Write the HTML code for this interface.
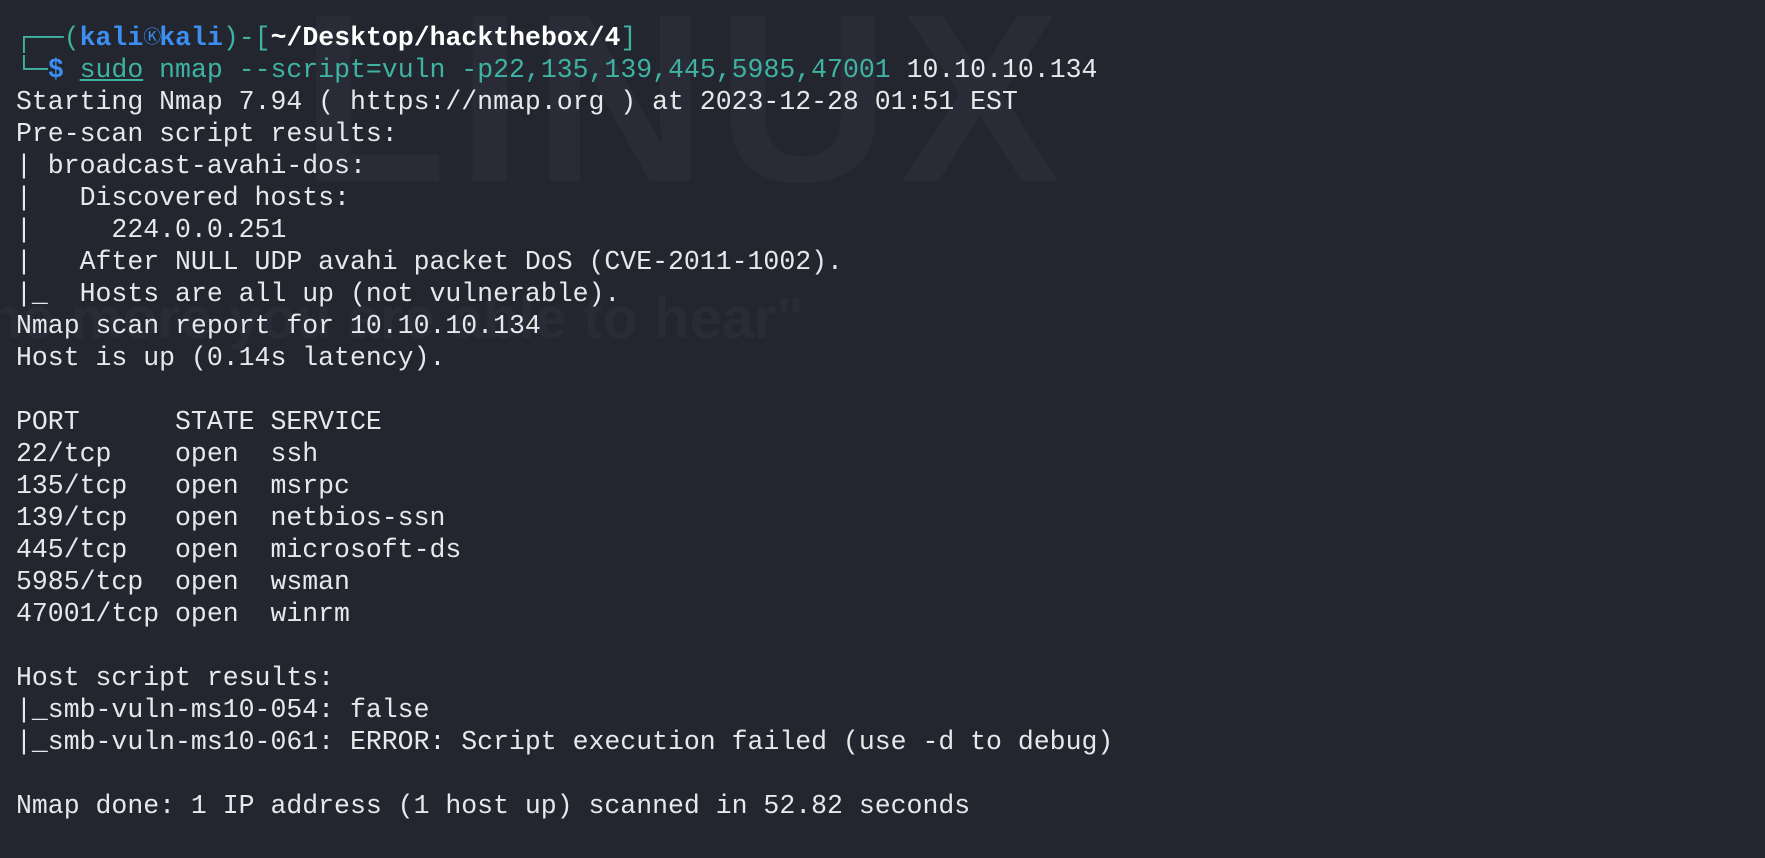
<!DOCTYPE html>
<html style="width:1765px;height:858px;overflow:hidden;"><head><meta charset="utf-8"><style>
html,body{margin:0;padding:0;}
body{width:1765px;height:858px;overflow:hidden;background:#23252f;position:relative;}
pre{position:absolute;left:16px;top:22px;margin:0;font-family:"Liberation Mono","DejaVu Sans Mono",monospace;font-size:26.5px;line-height:32px;color:#e8e8ea;white-space:pre;}
.t{color:#3fb3a3}.b{color:#3c8ef0;font-weight:bold}.w{color:#fff;font-weight:bold}.u{text-decoration:underline}
.k{display:inline-block;width:16px;font-size:18px;line-height:10px;vertical-align:2px;text-align:center;font-weight:normal}
.wm{position:absolute;font-family:"Liberation Sans",sans-serif;color:#292c36;white-space:nowrap;}
</style></head><body>
<div class="wm" style="left:300px;top:-40px;font-size:240px;font-weight:bold;letter-spacing:10px;">LINUX</div>
<div class="wm" style="left:-60px;top:285px;font-size:58px;font-weight:bold;">"the more you are able to hear"</div>
<pre><span class="t">┌──(</span><span class="b">kali<span class="k">Ⓚ</span>kali</span><span class="t">)-[</span><span class="w">~/Desktop/hackthebox/4</span><span class="t">]</span>
<span class="t">└─</span><span class="b">$</span> <span class="t u">sudo</span><span class="t"> nmap --script=vuln -p22,135,139,445,5985,47001</span> 10.10.10.134
Starting Nmap 7.94 ( https://nmap.org ) at 2023-12-28 01:51 EST
Pre-scan script results:
| broadcast-avahi-dos:
|   Discovered hosts:
|     224.0.0.251
|   After NULL UDP avahi packet DoS (CVE-2011-1002).
|_  Hosts are all up (not vulnerable).
Nmap scan report for 10.10.10.134
Host is up (0.14s latency).

PORT      STATE SERVICE
22/tcp    open  ssh
135/tcp   open  msrpc
139/tcp   open  netbios-ssn
445/tcp   open  microsoft-ds
5985/tcp  open  wsman
47001/tcp open  winrm

Host script results:
|_smb-vuln-ms10-054: false
|_smb-vuln-ms10-061: ERROR: Script execution failed (use -d to debug)

Nmap done: 1 IP address (1 host up) scanned in 52.82 seconds</pre>
</body></html>
